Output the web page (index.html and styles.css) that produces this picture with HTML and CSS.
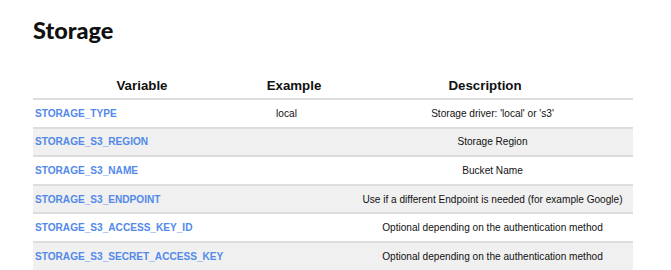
FILE: index.html
```html
<!DOCTYPE html>
<html>
    <head>
        <meta charset="utf-8">
        <title>Storage</title>
        <link rel="stylesheet" href="styles.css">
    </head>
    <body>
        <main>
            <h2>Storage</h2>
            <table class="env-table">
                <thead>
                    <tr>
                        <th class="col-var">Variable</th>
                        <th class="col-ex">Example</th>
                        <th class="col-desc">Description</th>
                    </tr>
                </thead>
                <tbody>
                    <tr>
                        <td class="var">STORAGE_TYPE</td>
                        <td class="ex">local</td>
                        <td class="desc">Storage driver: 'local' or 's3'</td>
                    </tr>
                    <tr>
                        <td class="var">STORAGE_S3_REGION</td>
                        <td class="ex"></td>
                        <td class="desc">Storage Region</td>
                    </tr>
                    <tr>
                        <td class="var">STORAGE_S3_NAME</td>
                        <td class="ex"></td>
                        <td class="desc">Bucket Name</td>
                    </tr>
                    <tr>
                        <td class="var">STORAGE_S3_ENDPOINT</td>
                        <td class="ex"></td>
                        <td class="desc">Use if a different Endpoint is needed (for example Google)</td>
                    </tr>
                    <tr>
                        <td class="var">STORAGE_S3_ACCESS_KEY_ID</td>
                        <td class="ex"></td>
                        <td class="desc">Optional depending on the authentication method</td>
                    </tr>
                    <tr>
                        <td class="var">STORAGE_S3_SECRET_ACCESS_KEY</td>
                        <td class="ex"></td>
                        <td class="desc">Optional depending on the authentication method</td>
                    </tr>
                </tbody>
            </table>
        </main>
    </body>
</html>
```

FILE: styles.css
```css
body {
    margin: 0;
    font-family: 'Liberation Sans', Arial, sans-serif;
    background-color: #fff;
    color: #111;
}

main {
    padding: 12px 38px 0 33px;
}

h2 {
    font-family: 'Lato', 'Open Sans', sans-serif;
    font-weight: 900;
    font-size: 23.5px;
    color: #111;
    margin: 0 0 23px;
    line-height: 36px;
}

.env-table {
    width: 600px;
    border-collapse: collapse;
    font-size: 10.1px;
}

.env-table th {
    font-size: 13.3px;
    font-weight: bold;
    text-align: center;
    padding: 7px 0 5px;
    border-bottom: 2px solid #ddd;
}

.col-var { width: 218px; }
.col-ex { width: 86px; }

.env-table td {
    height: 26.6px;
    padding: 0;
    text-align: center;
    border-bottom: 2px solid #ddd;
}

/* 本文セルは見出しより少し内側に寄せる */
.env-table td.ex {
    padding-right: 15px;
}

.env-table td.desc {
    padding-left: 15px;
}

.env-table tbody tr:nth-child(even) {
    background-color: #f0f0f0; /* 薄いグレーの縞 */
}

.env-table td.var {
    text-align: left;
    padding-left: 2px;
    font-weight: bold;
    color: #5289ea;
}
```
